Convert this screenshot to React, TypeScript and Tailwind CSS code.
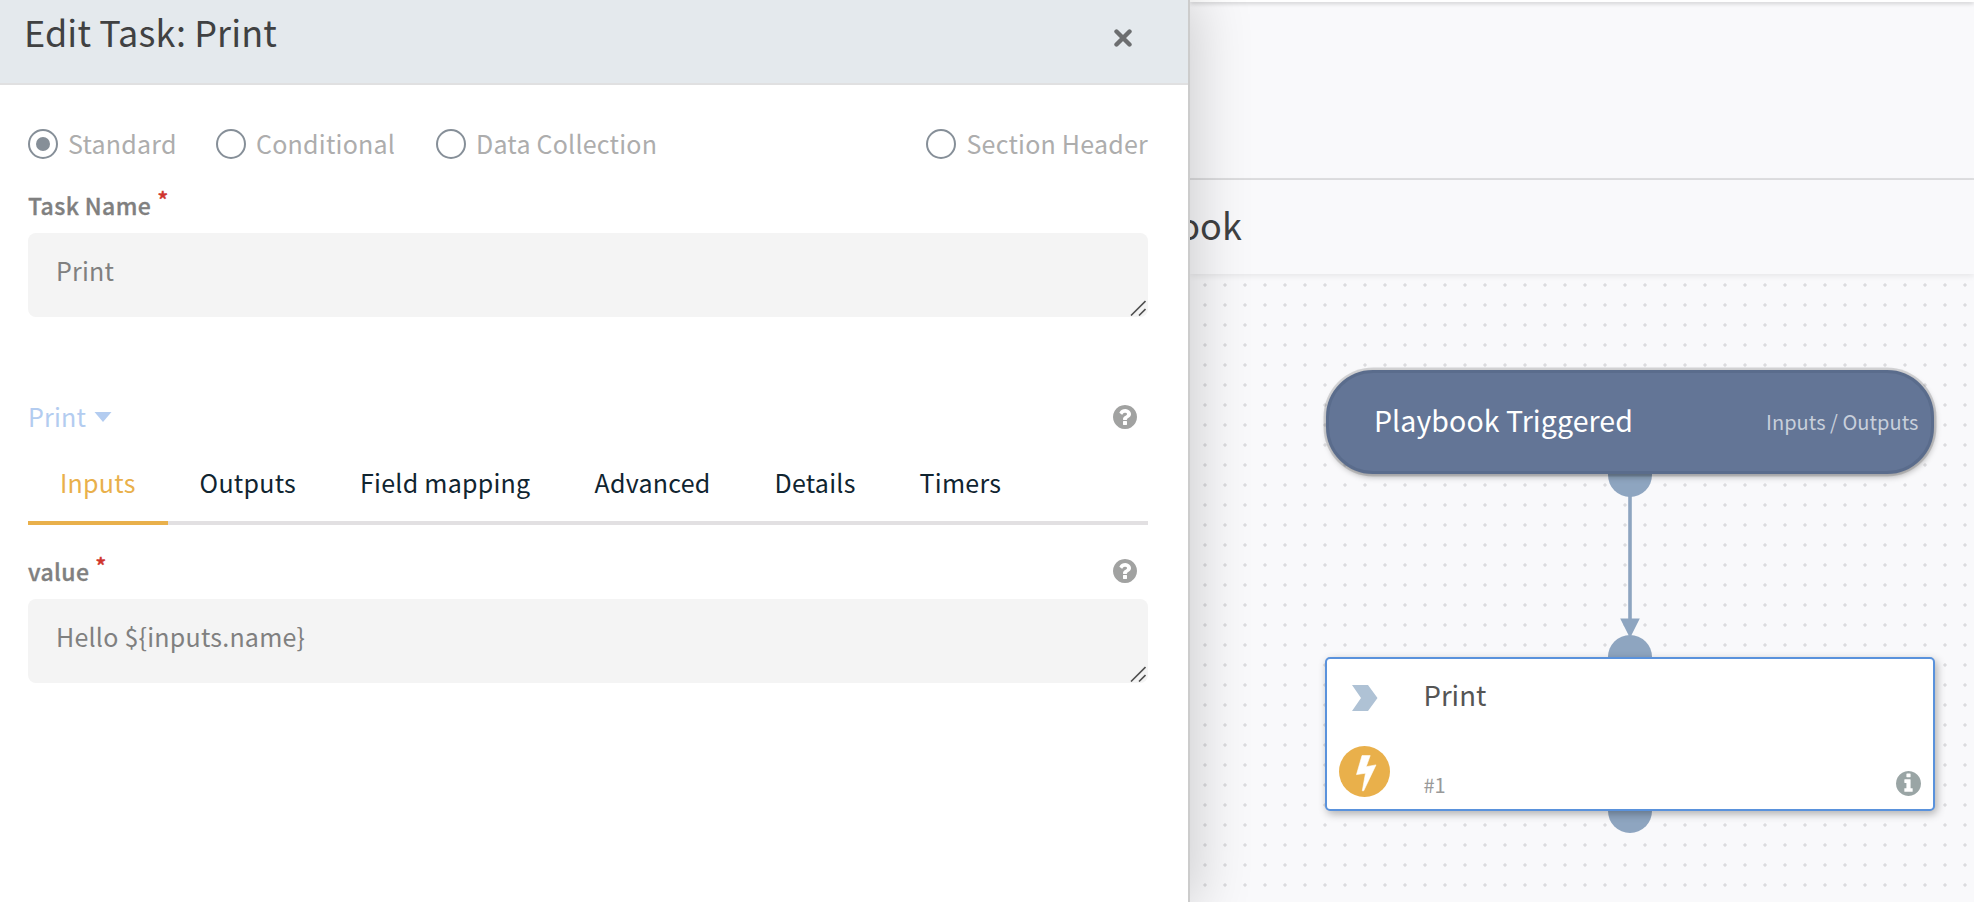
import React from "react";

type IconProps = { className?: string };

function HelpIcon({ className }: IconProps) {
  return (
    <svg viewBox="128 128 1536 1536" className={className} fill="currentColor">
      <path d="M1024 1376v-192q0-14-9-23t-23-9h-192q-14 0-23 9t-9 23v192q0 14 9 23t23 9h192q14 0 23-9t9-23zm256-672q0-88-55.5-163t-138.5-116-170-41q-243 0-371 213-15 24 8 42l132 100q7 6 19 6 16 0 25-12 53-68 86-92 34-24 86-24 48 0 85.5 26t37.5 59q0 38-20 61t-68 45q-63 28-115.5 86.5t-52.5 125.5v36q0 14 9 23t23 9h192q14 0 23-9t9-23q0-19 21.5-49.5t54.5-49.5q32-18 49-28.5t46-35 44.5-48 28-60.5 12.5-81zm384 192q0 209-103 385.5t-279.5 279.5-385.5 103-385.5-103-279.5-279.5-103-385.5 103-385.5 279.5-279.5 385.5-103 385.5 103 279.5 279.5 103 385.5z" />
    </svg>
  );
}

function InfoIcon({ className }: IconProps) {
  return (
    <svg viewBox="128 128 1536 1536" className={className} fill="currentColor">
      <path d="M1152 1376v-160q0-14-9-23t-23-9h-96v-512q0-14-9-23t-23-9h-320q-14 0-23 9t-9 23v160q0 14 9 23t23 9h96v320h-96q-14 0-23 9t-9 23v160q0 14 9 23t23 9h448q14 0 23-9t9-23zm-128-896v-160q0-14-9-23t-23-9h-192q-14 0-23 9t-9 23v160q0 14 9 23t23 9h192q14 0 23-9t9-23zm640 416q0 209-103 385.5t-279.5 279.5-385.5 103-385.5-103-279.5-279.5-103-385.5 103-385.5 279.5-279.5 385.5-103 385.5 103 279.5 279.5 103 385.5z" />
    </svg>
  );
}

function Radio({ label, checked, className = "" }: { label: string; checked?: boolean; className?: string }) {
  return (
    <label className={`flex h-[30px] items-center gap-[10px] ${className}`}>
      <span className="flex size-[30px] shrink-0 items-center justify-center rounded-full border-2 border-[#868f98]">
        {checked && <span className="size-[14px] rounded-full bg-[#868f98]" />}
      </span>
      <span className="whitespace-nowrap pb-[3px] text-[25px] leading-[30px] tracking-[0.23px] text-[#adadad]">{label}</span>
    </label>
  );
}

function FieldLabel({ text }: { text: string }) {
  return (
    <div className="-mt-px flex h-[36px] items-center text-[23px] font-medium leading-[36px] tracking-[0.38px] text-[#808080] [-webkit-text-stroke:0.35px]">
      {text}
      <span className="relative -top-[6px] ml-[6px] text-[23px] text-[#d0342c]">*</span>
    </div>
  );
}

function TextBox({ text }: { text: string }) {
  return (
    <div className="relative h-[84px] rounded-lg bg-[#f4f4f4] pl-[28px] pt-[19px] text-[25px] leading-[36px] tracking-[0.23px] text-[#808080]">
      {text}
      <svg viewBox="0 0 16 16" className="absolute bottom-[1px] right-[2px] size-4" fill="none" stroke="#505050" strokeWidth="1.6">
        <path d="M1 15.500L15.500 1M9 15.500L15.500 9" />
      </svg>
    </div>
  );
}

const tabs = ["Inputs", "Outputs", "Field mapping", "Advanced", "Details", "Timers"];

export default function App() {
  return (
    <div className="flex h-[902px] w-[1974px] overflow-hidden bg-[#f9f9fb] font-['Noto_Sans_CJK_SC','Noto_Sans',sans-serif]">
      <aside className="relative z-10 flex h-full w-[1190px] shrink-0 flex-col border-r-2 border-[#cccccc] bg-white shadow-[0_0_54px_5px_rgba(0,0,0,0.19)]">
        <header className="flex h-[85px] shrink-0 items-start justify-between border-b-2 border-[#e0e0e1] bg-[#e4e9ed] pl-[24px] pr-[56px]">
          <h1 className="pt-[5px] text-[36px] leading-[52px] tracking-[0.12px] text-[#404142]">Edit Task: Print</h1>
          <svg viewBox="0 0 18 18" className="mt-[29px] size-[18px]" stroke="#6c6e70" strokeWidth="4.400" strokeLinecap="round">
            <path d="M2.500 2.500L15.500 15.500M15.500 2.500L2.500 15.500" />
          </svg>
        </header>
        <div className="flex flex-col px-[28px] pt-[44px] pr-[40px]">
          <div className="flex items-center">
            <Radio label="Standard" checked className="w-[188px]" />
            <Radio label="Conditional" className="w-[220px]" />
            <Radio label="Data Collection" />
            <Radio label="Section Header" className="ml-auto" />
          </div>
          <div className="mt-[29px] h-[45px]">
            <FieldLabel text="Task Name" />
          </div>
          <TextBox text="Print" />
          <div className="mt-[82px] flex h-[36px] items-center justify-between pr-[11.500px]">
            <div className="flex items-center gap-[8px] pb-[2px] text-[25px] leading-[36px] tracking-[0.23px] text-[#b3ccf0]">
              Print
              <svg viewBox="0 0 18 10" className="mt-px h-[10px] w-[18px]" fill="currentColor">
                <path d="M0.500 0h17L9 10z" />
              </svg>
            </div>
            <HelpIcon className="size-6 text-[#a1a2a1]" />
          </div>
          <nav className="mt-[20px] flex h-[70px] border-b-4 border-[#e2e0e2]">
            {tabs.map((tab, i) => (
              <div
                key={tab}
                className={`h-[70px] whitespace-nowrap px-[32px] pt-[9px] text-[25px] leading-[36px] tracking-[0.25px] ${
                  i === 0 ? "border-b-4 border-[#e9b04b] text-[#e9b04b]" : "text-[#102430]"
                }`}
              >
                {tab}
              </div>
            ))}
          </nav>
          <div className="mt-[29px] flex h-[45px] items-start justify-between pr-[11.500px]">
            <FieldLabel text="value" />
            <HelpIcon className="mt-[5px] size-6 text-[#a1a2a1]" />
          </div>
          <TextBox text="Hello ${inputs.name}" />
        </div>
      </aside>

      <main className="relative flex min-w-0 flex-1 flex-col">
        <div className="h-[2px] shrink-0 bg-white shadow-[0_1px_4px_rgba(0,0,0,0.3)]" />
        <div className="h-[178px] shrink-0 border-b-2 border-[#dfdfe1]" />
        <div className="relative z-[1] flex h-[94px] shrink-0 items-center bg-[#f9f9fb] shadow-[0_2px_6px_rgba(0,0,0,0.08)]">
          <h2 className="-ml-[106px] -mt-[6px] whitespace-nowrap text-[36px] leading-[52px] text-[#404142]">Playbook</h2>
        </div>
        <div className="relative flex-1 bg-[radial-gradient(circle_at_center,#dbdbde_1.200px,transparent_2.100px)] bg-[length:20px_20px] bg-[position:5px_1px]">
          <div className="absolute left-[417.500px] top-[178px] size-[44.500px] rounded-full bg-[#8ea5c0]" />
          <div className="absolute left-[417.500px] top-[361px] size-[44.500px] rounded-full bg-[#8ea5c0]" />
          <div className="absolute left-[417.500px] top-[514px] size-[44.500px] rounded-full bg-[#8ea5c0]" />
          <svg viewBox="0 0 20 142" className="absolute left-[430px] top-[220px] h-[142px] w-[20px]" fill="#8ea5c0">
            <path d="M8.200 0h3.600v124.500h8L11 142h-2L0.200 124.500h8z" />
          </svg>
          <div className="absolute left-[136px] top-[96px] flex h-[104px] w-[608px] items-center justify-between rounded-[47px] border-[3px] border-[#5a6c8c] bg-[#637596] pl-[45px] pr-[12.500px] shadow-[0_0_0_2.500px_rgba(0,0,0,0.14),1px_3px_6px_rgba(0,0,0,0.28)]">
            <span className="-mt-[4px] text-[28.500px] tracking-[0.08px] text-white">Playbook Triggered</span>
            <span className="text-[20px] tracking-[0.04px] text-[#c8cfdb]">Inputs / Outputs</span>
          </div>
          <div className="absolute left-[135px] top-[383px] flex h-[154px] w-[610px] rounded-[5px] border-2 border-[#5a92dc] bg-white shadow-[2px_3px_8px_rgba(0,0,0,0.3)]">
            <div className="flex w-[96.500px] flex-col pl-[12px]">
              <svg viewBox="0 0 26 26" className="ml-[12.500px] mt-[26px] size-[26px]" fill="#afc2d5">
                <path d="M0 0h16L25.500 13L16 26H0L9 13z" />
              </svg>
              <svg viewBox="0 0 51 51" className="mt-[35px] size-[51px]">
                <circle cx="25.500" cy="25.500" r="25.500" fill="#e9b04b" />
                <path
                  d="M23 9.600h8.200L27.200 20.700L37 18.900L24.700 44.800H23.300L26.500 27.200L17.500 28.600z"
                  fill="#fff"
                  stroke="#fff"
                  strokeWidth="0.600"
                  strokeLinejoin="round"
                />
              </svg>
            </div>
            <div className="flex flex-1 flex-col">
              <span className="mt-[15px] text-[27.500px] leading-[40px] text-[#555555]">Print</span>
              <span className="mt-[57px] text-[20px] leading-[28px] text-[#999999]">#1</span>
            </div>
            <InfoIcon className="mr-[12px] mt-[112px] size-[25px] text-[#9aa5a5]" />
          </div>
        </div>
      </main>
    </div>
  );
}
